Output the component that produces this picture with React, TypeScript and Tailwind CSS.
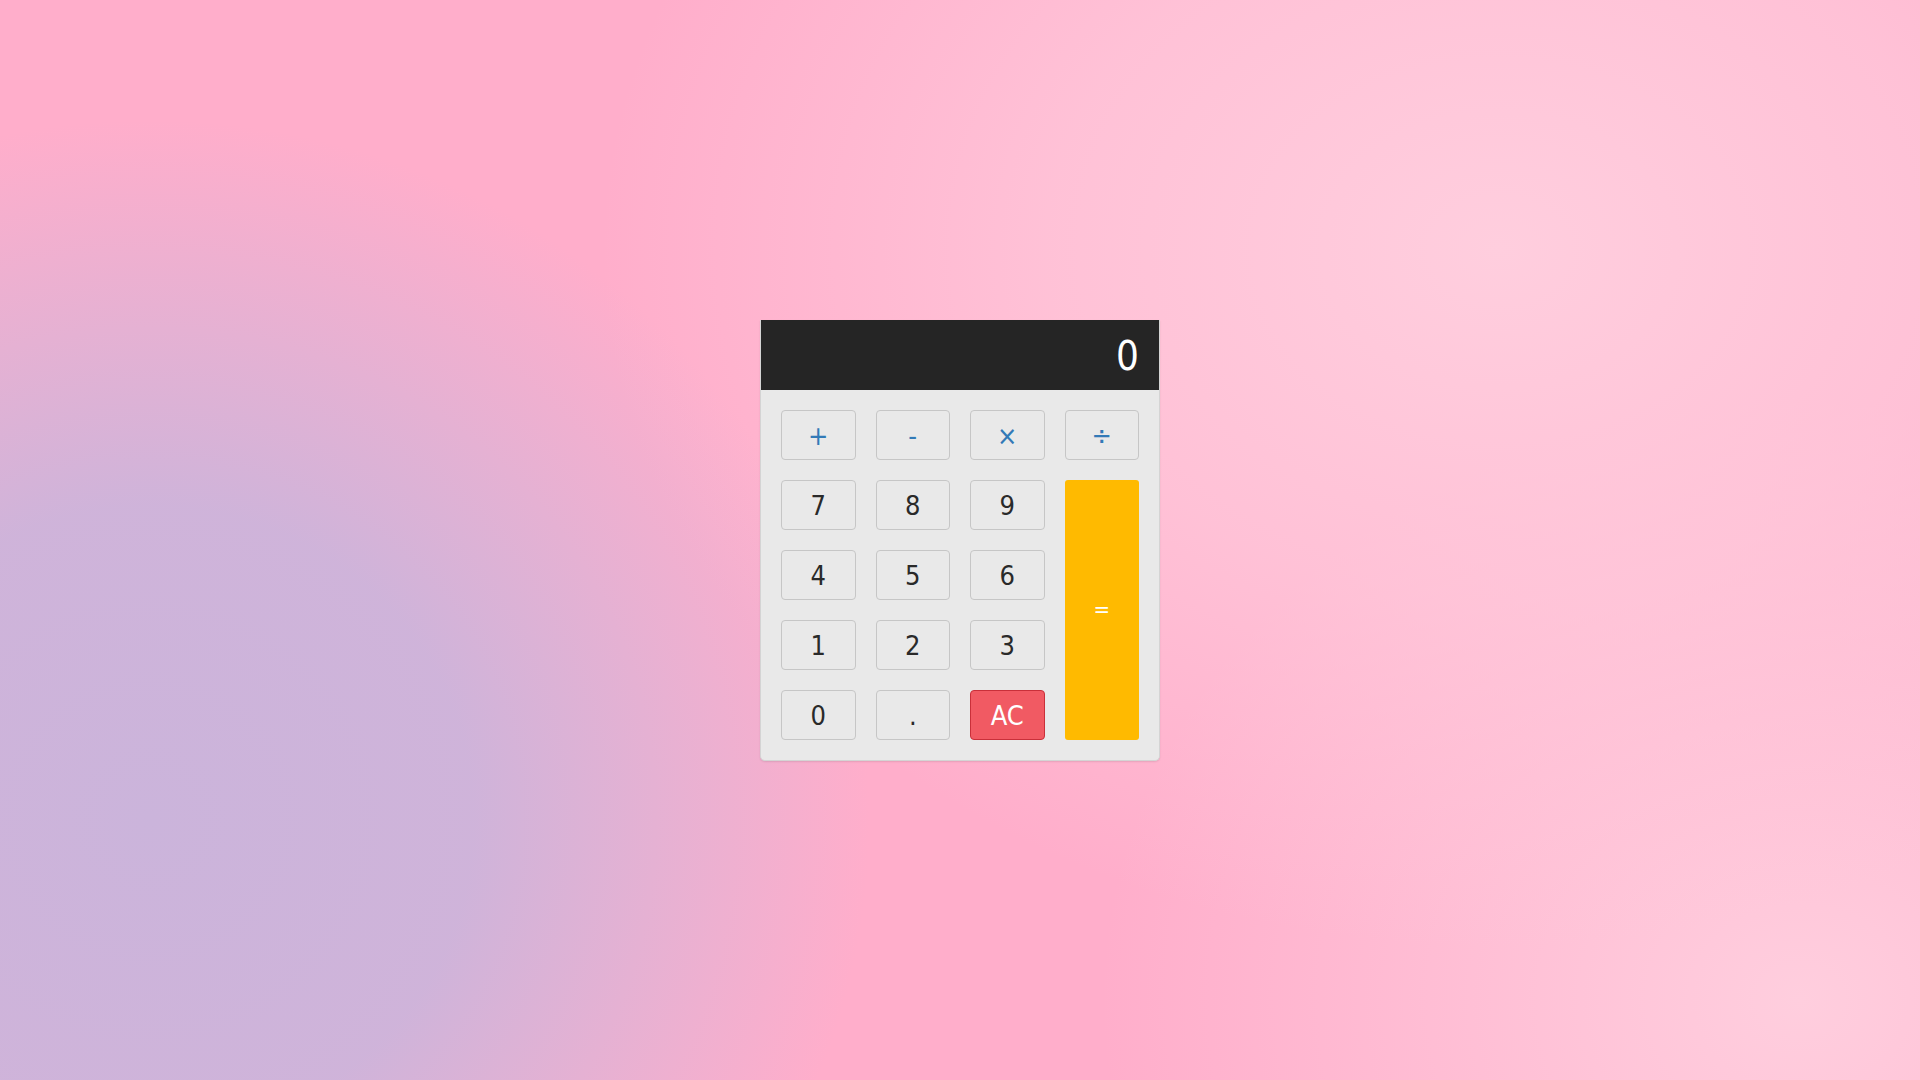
import React from "react";

const Btn = ({ label, kind }: { label: string; kind?: "op" | "ac" }) => {
  const base =
    "h-[50px] rounded-[4px] border flex items-center justify-center text-[27px] leading-none pt-[2px]";
  const cls =
    kind === "op"
      ? "border-[#c6c6c6] bg-[#e9e9e9] text-[#337ab7]"
      : kind === "ac"
      ? "border-[#c9303a] bg-[#f15a63] text-white"
      : "border-[#c6c6c6] bg-[#e9e9e9] text-[#2a2a2a]";
  return <button className={`${base} ${cls}`}>{label}</button>;
};

export default function App() {
  return (
    <div
      className="w-[1920px] h-[1080px] flex items-center justify-center bg-[#ffaecb]"
      style={{
        backgroundImage:
          "radial-gradient(ellipse 720px 700px at 150px 820px, rgba(203,180,219,1) 0%, rgba(203,180,219,0.92) 45%, rgba(203,180,219,0) 100%), radial-gradient(ellipse 900px 700px at 1500px 250px, rgba(255,206,222,1) 0%, rgba(255,206,222,0.6) 50%, rgba(255,206,222,0) 100%), radial-gradient(ellipse 700px 600px at 1800px 1000px, rgba(255,206,222,1) 0%, rgba(255,206,222,0) 100%)",
        fontFamily: '"DejaVu Sans Condensed", "DejaVu Sans", Verdana, sans-serif',
      }}
    >
      <div className="w-[400px] bg-[#e9e9e9] rounded-b-[5px] border-b border-x border-[#d4d4d4] overflow-hidden shadow-[0_1px_2px_rgba(0,0,0,0.1)]">
        <div className="h-[70px] bg-[#252525] text-white text-[40px] flex items-center justify-end px-[20px] pt-[3px] leading-none">
          0
        </div>
        <div className="grid grid-cols-4 grid-rows-[repeat(5,50px)] gap-[20px] p-[20px]">
          <Btn label="+" kind="op" />
          <Btn label="-" kind="op" />
          <Btn label="×" kind="op" />
          <Btn label="÷" kind="op" />
          <Btn label="7" />
          <Btn label="8" />
          <Btn label="9" />
          <button className="row-span-4 rounded-[3px] bg-[#ffba00] text-white text-[22px] flex items-center justify-center">
            =
          </button>
          <Btn label="4" />
          <Btn label="5" />
          <Btn label="6" />
          <Btn label="1" />
          <Btn label="2" />
          <Btn label="3" />
          <Btn label="0" />
          <Btn label="." />
          <Btn label="AC" kind="ac" />
        </div>
      </div>
    </div>
  );
}
